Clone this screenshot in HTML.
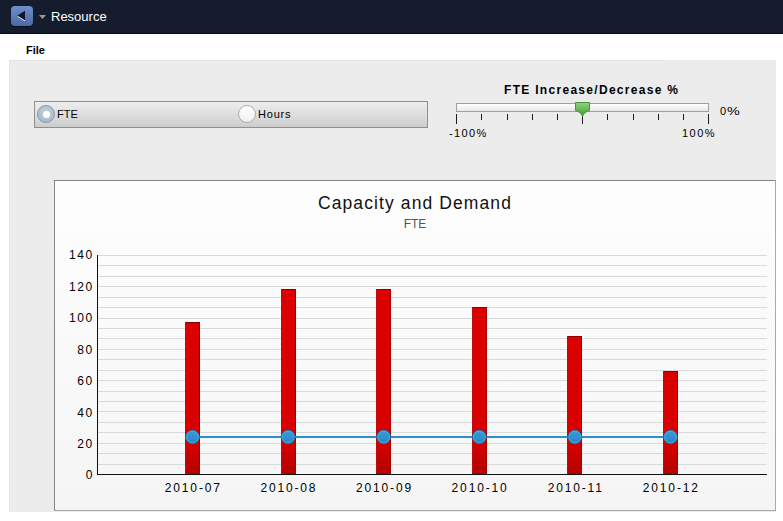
<!DOCTYPE html>
<html><head><meta charset="utf-8">
<style>
html,body{margin:0;padding:0;width:783px;height:521px;overflow:hidden;background:#fff;font-family:"Liberation Sans",sans-serif;position:relative}
.a{position:absolute}
#hdr{left:0;top:0;width:783px;height:34px;background:#141c2d;border-bottom:1px solid #060a14;box-sizing:border-box}
#btn{left:11px;top:6px;width:22px;height:20px;border-radius:4px;background:linear-gradient(#6e8fcd,#4b69a3);box-shadow:0 1px 1px #0a0e18}
#title{left:51px;top:9px;font-size:13px;color:#fff;line-height:16px}
#file{left:26px;top:43px;font-size:11px;font-weight:bold;color:#000;line-height:14px}
#gray{left:9px;top:60px;width:767px;height:452px;background:#ececec}
#rg{left:34px;top:101px;width:394px;height:27px;box-sizing:border-box;border:1px solid #8f8f8f;background:linear-gradient(#eeeeee,#cdcdcd)}
.lbl{font-size:11px;color:#000;line-height:13px}
#chart{left:54px;top:180px;width:722px;height:331px;box-sizing:border-box;border:1px solid;border-color:#868686 #a9a9a9 #a9a9a9 #868686;background:linear-gradient(#fefefe,#f5f5f5)}
.gl{position:absolute;left:98px;width:669px;height:1px;background:#dadada}
.yl{position:absolute;width:40px;left:54px;letter-spacing:1.7px;text-align:right;font-size:12px;line-height:14px;color:#000}
.xl{position:absolute;width:80px;text-align:center;letter-spacing:1.85px;font-size:12px;line-height:14px;color:#000}
.bar{position:absolute;width:15px;box-sizing:border-box;border:1px solid #9a0000;border-bottom:none;background:linear-gradient(#df0000 0%,#d80000 60%,#b00000 100%)}
.dot{position:absolute;width:14px;height:14px;border-radius:50%;background:radial-gradient(circle at 50% 30%,#4aa6e0,#2b86c4)}
</style></head><body>
<div id="hdr" class="a"></div>
<div id="btn" class="a"></div>
<svg class="a" style="left:0;top:0" width="60" height="33">
  <polygon points="17,15.7 25,10.8 25,20.7" fill="#121827"/>
  <line x1="17.5" y1="16.2" x2="25" y2="20.9" stroke="#e6ecf5" stroke-width="1"/>
  <polygon points="39,15 46,15 42.5,19" fill="#9a9a9a"/>
</svg>
<div id="title" class="a">Resource</div>
<div id="file" class="a">File</div>
<div id="gray" class="a"></div>
<div class="a" style="left:9px;top:60px;width:655px;height:1px;background:#e3e3e3"></div><div class="a" style="left:9px;top:60px;width:1px;height:452px;background:#e6e6e6"></div>

<div id="rg" class="a"></div>
<div class="a" style="left:37px;top:105px;width:18px;height:18px;border-radius:50%;box-sizing:border-box;border:1px solid #8a97a8;background:radial-gradient(circle at 50% 40%,#c9d3df,#9fb0c4)"></div>
<div class="a" style="left:42.5px;top:110.5px;width:7px;height:7px;border-radius:50%;background:#fff"></div>
<div class="a lbl" style="left:57px;top:108px">FTE</div>
<div class="a" style="left:238px;top:105px;width:18px;height:18px;border-radius:50%;box-sizing:border-box;border:1px solid #aaa;background:linear-gradient(#fff,#f0f0f0)"></div>
<div class="a lbl" style="left:258px;top:108px;letter-spacing:0.8px">Hours</div>

<div class="a" style="left:504px;top:83px;font-size:12px;font-weight:bold;line-height:14px;letter-spacing:1.3px">FTE Increase/Decrease %</div>
<div class="a" style="left:456px;top:103px;width:253px;height:9px;box-sizing:border-box;border:1px solid #a0a0a0;background:linear-gradient(#fff,#e8e8e8)"></div>
<svg class="a" style="left:0;top:0" width="783" height="140">
<defs><linearGradient id="tg" x1="0" y1="0" x2="0" y2="1"><stop offset="0" stop-color="#93d383"/><stop offset="0.6" stop-color="#5cb54b"/><stop offset="1" stop-color="#3f9c33"/></linearGradient></defs>
<rect x="456" y="114" width="1" height="10" fill="#1a1a1a" shape-rendering="crispEdges"/>
<rect x="481" y="114" width="1" height="6" fill="#1a1a1a" shape-rendering="crispEdges"/>
<rect x="507" y="114" width="1" height="6" fill="#1a1a1a" shape-rendering="crispEdges"/>
<rect x="532" y="114" width="1" height="6" fill="#1a1a1a" shape-rendering="crispEdges"/>
<rect x="557" y="114" width="1" height="6" fill="#1a1a1a" shape-rendering="crispEdges"/>
<rect x="582" y="114" width="1" height="10" fill="#1a1a1a" shape-rendering="crispEdges"/>
<rect x="607" y="114" width="1" height="6" fill="#1a1a1a" shape-rendering="crispEdges"/>
<rect x="633" y="114" width="1" height="6" fill="#1a1a1a" shape-rendering="crispEdges"/>
<rect x="658" y="114" width="1" height="6" fill="#1a1a1a" shape-rendering="crispEdges"/>
<rect x="683" y="114" width="1" height="6" fill="#1a1a1a" shape-rendering="crispEdges"/>
<rect x="708" y="114" width="1" height="10" fill="#1a1a1a" shape-rendering="crispEdges"/>
<path d="M575.5,102.5 L589.5,102.5 L589.5,110.5 C586,111.5 583.5,113.5 582.5,116.5 C581.5,113.5 579,111.5 575.5,110.5 Z" fill="url(#tg)" stroke="#4a9440" stroke-width="1"/>
</svg>
<div class="a lbl" style="left:720px;top:105px;letter-spacing:0.6px">0<span style="display:inline-block;transform:scaleX(1.3);transform-origin:0 0">%</span></div>
<div class="a lbl" style="left:449px;top:127px;letter-spacing:1.4px">-100%</div>
<div class="a lbl" style="left:682px;top:127px;letter-spacing:1.45px">100%</div>

<div id="chart" class="a"></div>
<!--CHART-->
<svg class="a" style="left:0;top:0" width="783" height="521" shape-rendering="crispEdges">
<rect x="98" y="255" width="669" height="1" fill="#d9d9d9"/>
<rect x="98" y="265" width="669" height="1" fill="#d9d9d9"/>
<rect x="98" y="276" width="669" height="1" fill="#d9d9d9"/>
<rect x="98" y="286" width="669" height="1" fill="#d9d9d9"/>
<rect x="98" y="297" width="669" height="1" fill="#d9d9d9"/>
<rect x="98" y="307" width="669" height="1" fill="#d9d9d9"/>
<rect x="98" y="318" width="669" height="1" fill="#d9d9d9"/>
<rect x="98" y="328" width="669" height="1" fill="#d9d9d9"/>
<rect x="98" y="338" width="669" height="1" fill="#d9d9d9"/>
<rect x="98" y="349" width="669" height="1" fill="#d9d9d9"/>
<rect x="98" y="359" width="669" height="1" fill="#d9d9d9"/>
<rect x="98" y="370" width="669" height="1" fill="#d9d9d9"/>
<rect x="98" y="380" width="669" height="1" fill="#d9d9d9"/>
<rect x="98" y="391" width="669" height="1" fill="#d9d9d9"/>
<rect x="98" y="401" width="669" height="1" fill="#d9d9d9"/>
<rect x="98" y="411" width="669" height="1" fill="#d9d9d9"/>
<rect x="98" y="422" width="669" height="1" fill="#d9d9d9"/>
<rect x="98" y="432" width="669" height="1" fill="#d9d9d9"/>
<rect x="98" y="443" width="669" height="1" fill="#d9d9d9"/>
<rect x="98" y="453" width="669" height="1" fill="#d9d9d9"/>
<rect x="98" y="464" width="669" height="1" fill="#d9d9d9"/>
<defs><linearGradient id="bg" gradientUnits="userSpaceOnUse" x1="0" y1="255" x2="0" y2="474"><stop offset="0" stop-color="#df0000"/><stop offset="0.84" stop-color="#d90000"/><stop offset="1" stop-color="#b60000"/></linearGradient><linearGradient id="dg" x1="0" y1="0" x2="0" y2="1"><stop offset="0" stop-color="#389ddb"/><stop offset="1" stop-color="#2a84c2"/></linearGradient></defs>
<rect x="185" y="322" width="15" height="152" fill="url(#bg)"/>
<rect x="185" y="322" width="15" height="1" fill="#8e0000"/>
<rect x="185" y="322" width="1" height="152" fill="#b51010"/>
<rect x="199" y="322" width="1" height="152" fill="#a50000"/>
<rect x="281" y="289" width="15" height="185" fill="url(#bg)"/>
<rect x="281" y="289" width="15" height="1" fill="#8e0000"/>
<rect x="281" y="289" width="1" height="185" fill="#b51010"/>
<rect x="295" y="289" width="1" height="185" fill="#a50000"/>
<rect x="376" y="289" width="15" height="185" fill="url(#bg)"/>
<rect x="376" y="289" width="15" height="1" fill="#8e0000"/>
<rect x="376" y="289" width="1" height="185" fill="#b51010"/>
<rect x="390" y="289" width="1" height="185" fill="#a50000"/>
<rect x="472" y="307" width="15" height="167" fill="url(#bg)"/>
<rect x="472" y="307" width="15" height="1" fill="#8e0000"/>
<rect x="472" y="307" width="1" height="167" fill="#b51010"/>
<rect x="486" y="307" width="1" height="167" fill="#a50000"/>
<rect x="567" y="336" width="15" height="138" fill="url(#bg)"/>
<rect x="567" y="336" width="15" height="1" fill="#8e0000"/>
<rect x="567" y="336" width="1" height="138" fill="#b51010"/>
<rect x="581" y="336" width="1" height="138" fill="#a50000"/>
<rect x="663" y="371" width="15" height="103" fill="url(#bg)"/>
<rect x="663" y="371" width="15" height="1" fill="#8e0000"/>
<rect x="663" y="371" width="1" height="103" fill="#b51010"/>
<rect x="677" y="371" width="1" height="103" fill="#a50000"/>
<rect x="97" y="255" width="1" height="220" fill="#111"/>
<rect x="97" y="474" width="670" height="1" fill="#111"/>
</svg>
<svg class="a" style="left:0;top:0" width="783" height="521">
<line x1="192.5" y1="437" x2="670.5" y2="437" stroke="#2a8fd2" stroke-width="2"/>
<circle cx="192.5" cy="437" r="6.9" fill="url(#dg)" stroke="#1c5f91" stroke-width="0.9"/><circle cx="192.5" cy="437" r="5.9" fill="none" stroke="#62b6e8" stroke-width="0.8" opacity="0.8"/>
<circle cx="288.1" cy="437" r="6.9" fill="url(#dg)" stroke="#1c5f91" stroke-width="0.9"/><circle cx="288.1" cy="437" r="5.9" fill="none" stroke="#62b6e8" stroke-width="0.8" opacity="0.8"/>
<circle cx="383.7" cy="437" r="6.9" fill="url(#dg)" stroke="#1c5f91" stroke-width="0.9"/><circle cx="383.7" cy="437" r="5.9" fill="none" stroke="#62b6e8" stroke-width="0.8" opacity="0.8"/>
<circle cx="479.3" cy="437" r="6.9" fill="url(#dg)" stroke="#1c5f91" stroke-width="0.9"/><circle cx="479.3" cy="437" r="5.9" fill="none" stroke="#62b6e8" stroke-width="0.8" opacity="0.8"/>
<circle cx="574.9" cy="437" r="6.9" fill="url(#dg)" stroke="#1c5f91" stroke-width="0.9"/><circle cx="574.9" cy="437" r="5.9" fill="none" stroke="#62b6e8" stroke-width="0.8" opacity="0.8"/>
<circle cx="670.5" cy="437" r="6.9" fill="url(#dg)" stroke="#1c5f91" stroke-width="0.9"/><circle cx="670.5" cy="437" r="5.9" fill="none" stroke="#62b6e8" stroke-width="0.8" opacity="0.8"/>
</svg>
<div class="yl" style="top:468px">0</div>
<div class="yl" style="top:437px">20</div>
<div class="yl" style="top:406px">40</div>
<div class="yl" style="top:374px">60</div>
<div class="yl" style="top:343px">80</div>
<div class="yl" style="top:311px">100</div>
<div class="yl" style="top:280px">120</div>
<div class="yl" style="top:248px">140</div>
<div class="xl" style="left:153.3px;top:481px">2010-07</div>
<div class="xl" style="left:248.9px;top:481px">2010-08</div>
<div class="xl" style="left:344.5px;top:481px">2010-09</div>
<div class="xl" style="left:440.1px;top:481px">2010-10</div>
<div class="xl" style="left:535.7px;top:481px">2010-11</div>
<div class="xl" style="left:631.3px;top:481px">2010-12</div>
<div class="a" style="left:54px;top:194px;width:722px;text-align:center;font-size:17.5px;line-height:18px;color:#111;letter-spacing:1.1px">Capacity and Demand</div>
<div class="a" style="left:54px;top:218px;width:722px;text-align:center;font-size:12px;line-height:13px;color:#555">FTE</div>
<!--/CHART-->
</body></html>
